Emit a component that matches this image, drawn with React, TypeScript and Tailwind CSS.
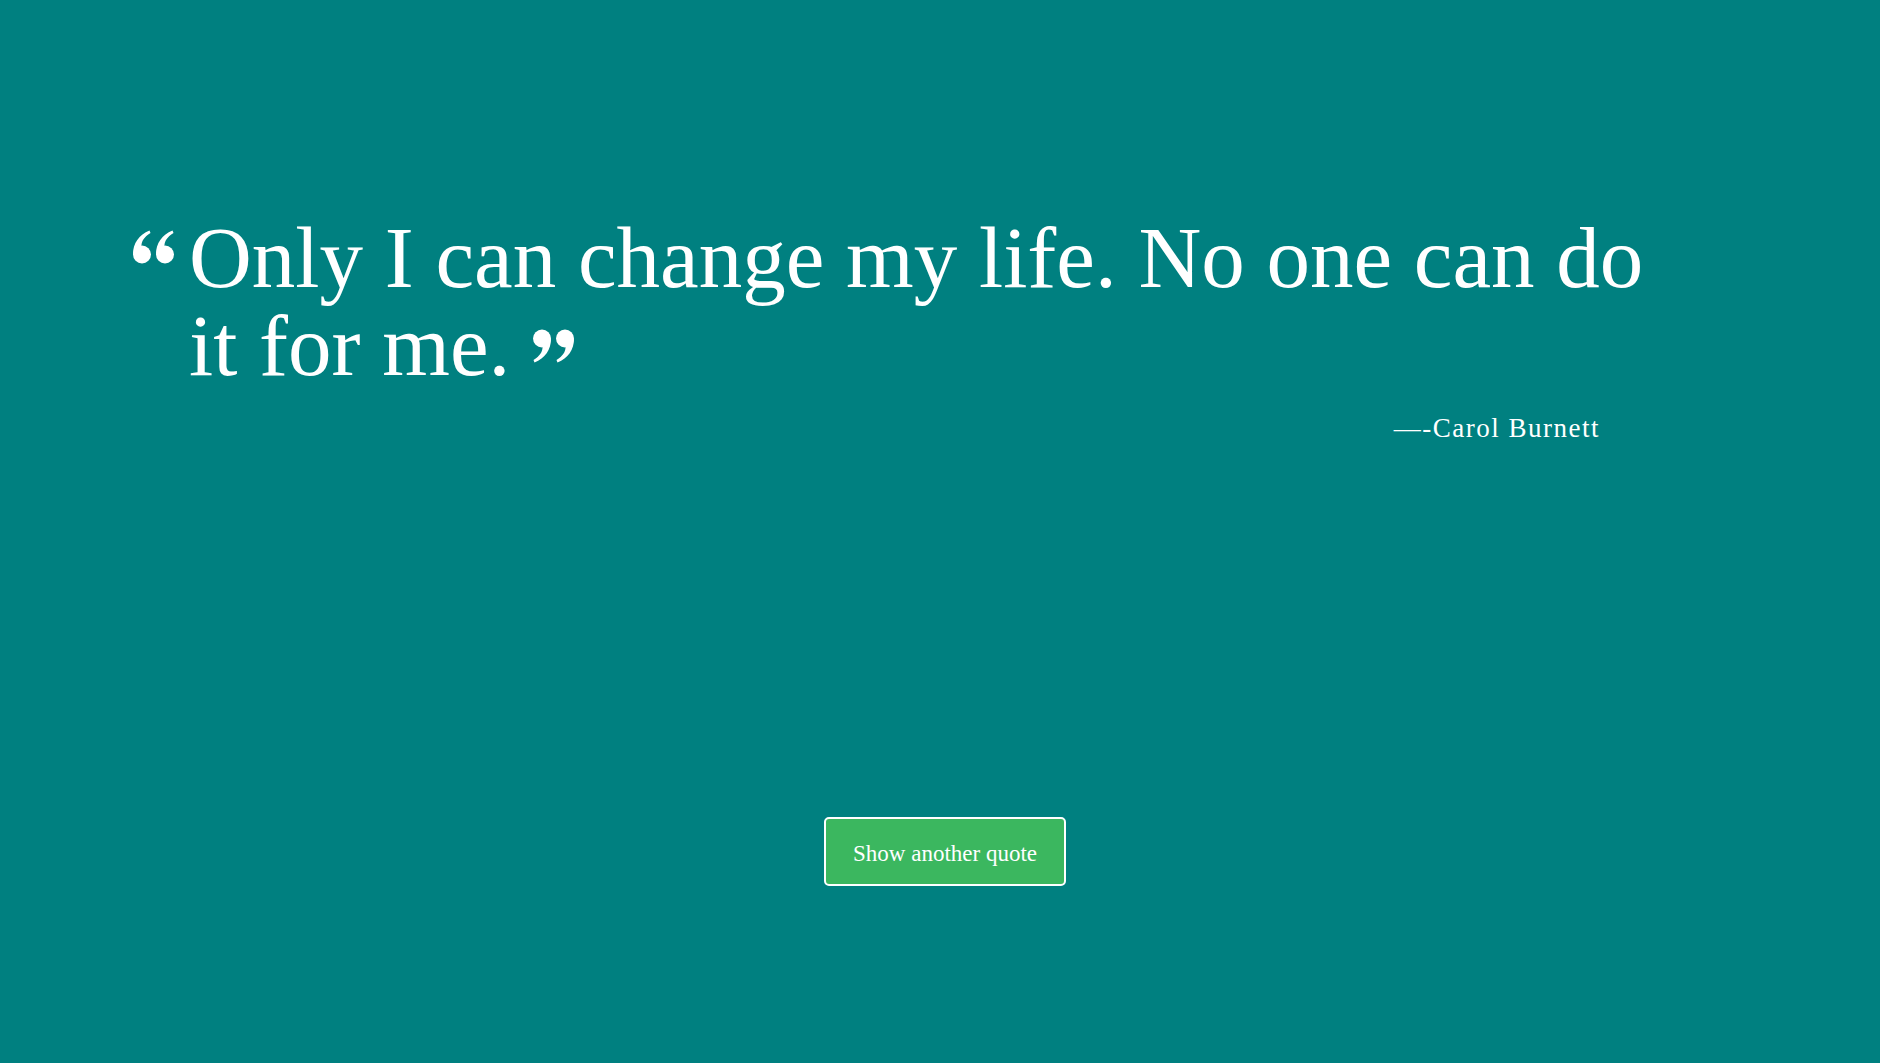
import React from 'react'

function QuoteMark({ closing = false }: { closing?: boolean }) {
  // two filled drops with tails, like the heavy display-serif quotes
  const mark = (x: number) => (
    <g transform={`translate(${x} 0)`}>
      <circle cx="10" cy="24.5" r="9" />
      <path d="M1 24.5 C1 13 7 5 17.5 0.5 L18.5 3 C12 7 9.5 11.5 9.5 15.5 Z" />
    </g>
  )
  return (
    <svg
      width="43"
      height="34"
      viewBox="0 0 43 34"
      fill="currentColor"
      className={closing ? 'inline-block align-[12px]' : 'shrink-0 mt-[16px]'}
    >
      <g transform={closing ? 'rotate(180 21.5 17)' : undefined}>
        {mark(0)}
        {mark(23)}
      </g>
    </svg>
  )
}

export default function App() {
  return (
    <div
      className="min-h-screen bg-[#008080] text-white"
      style={{ fontFamily: '"Liberation Serif", "Times New Roman", serif' }}
    >
      <div className="pt-[214px] pl-[132px]">
        <div className="flex gap-[14px]">
          <QuoteMark />
          <div className="w-[1490px]">
            <p className="text-[87px] leading-[88px]">
              Only I can change my life. No one can do it for me. <QuoteMark closing />
            </p>
            <p className="mt-[20px] pr-[79px] text-right text-[27px] leading-[36px] tracking-[1.5px]">
              —-Carol Burnett
            </p>
          </div>
        </div>
      </div>

      <div className="mt-[371px] flex justify-center pl-[10px]">
        <button className="w-[242px] h-[69px] pt-[5px] rounded-[5px] border-2 border-white bg-[#3bb75f] text-[23px] text-white">
          Show another quote
        </button>
      </div>
    </div>
  )
}
